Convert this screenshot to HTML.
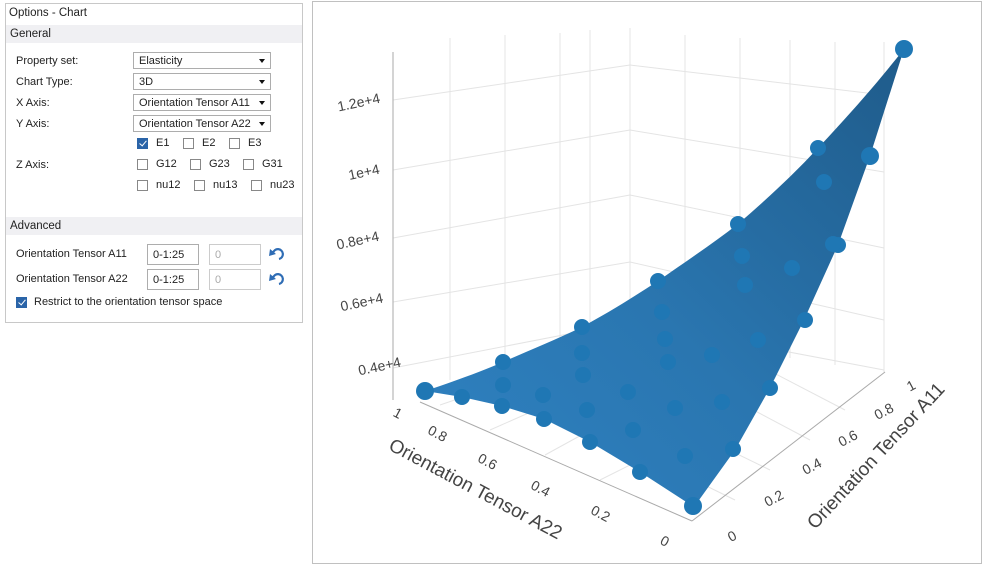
<!DOCTYPE html>
<html><head><meta charset="utf-8"><style>
body{margin:0;width:983px;height:566px;background:#fff;font-family:"Liberation Sans",sans-serif;font-size:11px;color:#222;position:relative;overflow:hidden}
.p{position:absolute}
.panel{left:5px;top:3px;width:296px;height:318px;border:1px solid #c8c8c8}
.hdr{position:absolute;left:6px;width:296px;height:18px;background:#f0f0f3;line-height:18px;padding-left:4px;box-sizing:border-box;font-size:11.5px}
.lbl{position:absolute;left:16px;font-size:11px}
.dd{position:absolute;left:133px;width:138px;height:17px;border:1px solid #adadad;box-sizing:border-box;line-height:16px;padding-left:5px;background:#fff}
.dd:after{content:"";position:absolute;right:5px;top:6px;border-left:3.5px solid transparent;border-right:3.5px solid transparent;border-top:4px solid #111}
.cb{position:absolute;width:11px;height:11px;border:1px solid #888;box-sizing:border-box;background:#fff}
.cb.on{background:#2a64a8;border-color:#2a64a8}
.cb.on:after{content:"";position:absolute;left:3px;top:0px;width:3px;height:6px;border-right:1.6px solid #fff;border-bottom:1.6px solid #fff;transform:rotate(40deg)}
.ct{position:absolute;font-size:11px}
.in{position:absolute;height:21px;border:1px solid #adadad;box-sizing:border-box;line-height:20px;padding-left:5px;background:#fff}
</style></head><body>
<div class="p panel"></div>
<div class="p" style="left:9px;top:7px;font-size:11.5px">Options - Chart</div>
<div class="hdr" style="top:25px">General</div>
<div class="lbl" style="top:55px">Property set:</div><div class="dd" style="top:52px">Elasticity</div>
<div class="lbl" style="top:76px">Chart Type:</div><div class="dd" style="top:73px">3D</div>
<div class="lbl" style="top:97px">X Axis:</div><div class="dd" style="top:94px">Orientation Tensor A11</div>
<div class="lbl" style="top:118px">Y Axis:</div><div class="dd" style="top:115px">Orientation Tensor A22</div>
<div class="lbl" style="top:159px">Z Axis:</div>
<div class="cb on" style="left:137px;top:138px"></div><div class="ct" style="left:156px;top:137px">E1</div>
<div class="cb" style="left:183px;top:138px"></div><div class="ct" style="left:202px;top:137px">E2</div>
<div class="cb" style="left:229px;top:138px"></div><div class="ct" style="left:248px;top:137px">E3</div>
<div class="cb" style="left:137px;top:159px"></div><div class="ct" style="left:156px;top:158px">G12</div>
<div class="cb" style="left:190px;top:159px"></div><div class="ct" style="left:209px;top:158px">G23</div>
<div class="cb" style="left:243px;top:159px"></div><div class="ct" style="left:262px;top:158px">G31</div>
<div class="cb" style="left:137px;top:180px"></div><div class="ct" style="left:156px;top:179px">nu12</div>
<div class="cb" style="left:194px;top:180px"></div><div class="ct" style="left:213px;top:179px">nu13</div>
<div class="cb" style="left:251px;top:180px"></div><div class="ct" style="left:270px;top:179px">nu23</div>
<div class="hdr" style="top:217px">Advanced</div>
<div class="lbl" style="top:248px">Orientation Tensor A11</div>
<div class="in" style="left:147px;top:244px;width:52px">0-1:25</div>
<div class="in" style="left:209px;top:244px;width:52px;color:#aaa;border-color:#ccc">0</div>
<div class="lbl" style="top:273px">Orientation Tensor A22</div>
<div class="in" style="left:147px;top:269px;width:52px">0-1:25</div>
<div class="in" style="left:209px;top:269px;width:52px;color:#aaa;border-color:#ccc">0</div>
<svg class="p" style="left:266px;top:244px" width="20" height="50"><g fill="none" stroke="#2f6db5" stroke-width="2.2"><path d="M7 9 A5 5 0 1 1 13 15"/><path d="M7 34 A5 5 0 1 1 13 40"/></g><path d="M4 5 L10 10 L3 12Z M4 30 L10 35 L3 37Z" fill="#2f6db5"/></svg>
<div class="cb on" style="left:16px;top:297px"></div><div class="ct" style="left:34px;top:296px">Restrict to the orientation tensor space</div>

<div class="p" style="left:312px;top:1px;width:668px;height:561px;border:1px solid #c0c0c0"></div>
<svg class="p" style="left:0;top:0" width="983" height="566" font-family="Liberation Sans, DejaVu Sans, sans-serif">
<defs><linearGradient id="g" x1="0" y1="1" x2="1" y2="0"><stop offset="0" stop-color="#2f82c2"/><stop offset="0.45" stop-color="#2a76b0"/><stop offset="1" stop-color="#1f5b8a"/></linearGradient></defs>
<g stroke="#e4e4e4" stroke-width="1" fill="none">
<line x1="630" y1="28" x2="630" y2="340"/><line x1="884" y1="42" x2="884" y2="372"/>
<line x1="393" y1="100" x2="630" y2="65"/><line x1="393" y1="170" x2="630" y2="130"/><line x1="393" y1="238" x2="630" y2="195"/><line x1="393" y1="302" x2="630" y2="262"/><line x1="393" y1="368" x2="630" y2="322"/>
<line x1="630" y1="65" x2="884" y2="95"/><line x1="630" y1="130" x2="884" y2="172"/><line x1="630" y1="195" x2="884" y2="248"/><line x1="630" y1="262" x2="884" y2="320"/><line x1="630" y1="322" x2="884" y2="370"/>
<line x1="450" y1="38" x2="450" y2="380"/><line x1="505" y1="35" x2="505" y2="370"/><line x1="560" y1="33" x2="560" y2="355"/><line x1="590" y1="30" x2="590" y2="345"/>
<line x1="685" y1="35" x2="685" y2="345"/><line x1="740" y1="38" x2="740" y2="352"/><line x1="790" y1="40" x2="790" y2="358"/><line x1="835" y1="42" x2="835" y2="365"/>
<line x1="440" y1="405" x2="630" y2="340"/><line x1="490" y1="430" x2="660" y2="355"/><line x1="545" y1="455" x2="700" y2="370"/><line x1="600" y1="480" x2="760" y2="400"/>
<line x1="735" y1="500" x2="510" y2="390"/><line x1="770" y1="470" x2="575" y2="375"/><line x1="810" y1="440" x2="640" y2="350"/><line x1="845" y1="410" x2="720" y2="345"/>
</g>
<g stroke="#aaa" stroke-width="1"><line x1="420" y1="402" x2="692" y2="521"/><line x1="692" y1="521" x2="885" y2="372"/><line x1="393" y1="52" x2="393" y2="400"/></g>
<path d="M425 391 C455 381 480 372 503 362 C530 350 555 340 580 328 C608 313 632 298 658 281 C688 260 712 244 738 224 C768 198 792 176 818 148 C850 114 878 82 904 49 L870 156 L838 245 L804 320 L770 388 L735 450 L694 507 L640 472 L590 442 L544 419 L502 406 L462 397 Z" fill="url(#g)"/>
<g fill="#1f77b4">
<circle cx="425" cy="391" r="9"/><circle cx="462" cy="397" r="8"/><circle cx="502" cy="406" r="8"/><circle cx="544" cy="419" r="8"/><circle cx="590" cy="442" r="8"/><circle cx="640" cy="472" r="8"/><circle cx="693" cy="506" r="9"/>
<circle cx="503" cy="362" r="8"/><circle cx="582" cy="327" r="8"/><circle cx="658" cy="281" r="8"/><circle cx="738" cy="224" r="8"/><circle cx="818" cy="148" r="8"/><circle cx="904" cy="49" r="9"/>
<circle cx="870" cy="156" r="9"/><circle cx="838" cy="245" r="8"/><circle cx="805" cy="320" r="8"/><circle cx="770" cy="388" r="8"/><circle cx="733" cy="449" r="8"/>
<circle cx="503" cy="385" r="8"/><circle cx="543" cy="395" r="8"/><circle cx="587" cy="410" r="8"/><circle cx="633" cy="430" r="8"/><circle cx="685" cy="456" r="8"/>
<circle cx="582" cy="353" r="8"/><circle cx="583" cy="375" r="8"/><circle cx="628" cy="392" r="8"/><circle cx="675" cy="408" r="8"/><circle cx="722" cy="402" r="8"/>
<circle cx="662" cy="312" r="8"/><circle cx="665" cy="339" r="8"/><circle cx="668" cy="362" r="8"/><circle cx="712" cy="355" r="8"/><circle cx="758" cy="340" r="8"/>
<circle cx="745" cy="285" r="8"/><circle cx="792" cy="268" r="8"/><circle cx="742" cy="256" r="8"/><circle cx="833" cy="244" r="8"/><circle cx="824" cy="182" r="8"/>
</g>
<g fill="#444" font-size="14">
<text x="337" y="106" transform="rotate(-12 364 101)">1.2e+4</text>
<text x="348" y="176" transform="rotate(-12 368 171)">1e+4</text>
<text x="336" y="244" transform="rotate(-12 363 239)">0.8e+4</text>
<text x="340" y="306" transform="rotate(-12 366 301)">0.6e+4</text>
<text x="358" y="372" transform="rotate(-12 375 367)">0.4e+4</text>
<text x="394" y="418" transform="rotate(28 398 413)">1</text>
<text x="428" y="438" transform="rotate(28 437 433)">0.8</text>
<text x="478" y="466" transform="rotate(28 487 461)">0.6</text>
<text x="531" y="493" transform="rotate(28 540 488)">0.4</text>
<text x="591" y="518" transform="rotate(28 600 513)">0.2</text>
<text x="661" y="546" transform="rotate(28 665 541)">0</text>
<text x="907" y="390" transform="rotate(-28 912 385)">1</text>
<text x="874" y="416" transform="rotate(-28 884 411)">0.8</text>
<text x="838" y="443" transform="rotate(-28 848 438)">0.6</text>
<text x="802" y="471" transform="rotate(-28 812 466)">0.4</text>
<text x="764" y="503" transform="rotate(-28 774 498)">0.2</text>
<text x="728" y="541" transform="rotate(-28 732 536)">0</text>
<text x="475" y="495" font-size="19" text-anchor="middle" transform="rotate(28 475 490)">Orientation Tensor A22</text>
<text x="876" y="462" font-size="19" text-anchor="middle" transform="rotate(-47 876 456)">Orientation Tensor A11</text>
</g>
</svg>
</body></html>
